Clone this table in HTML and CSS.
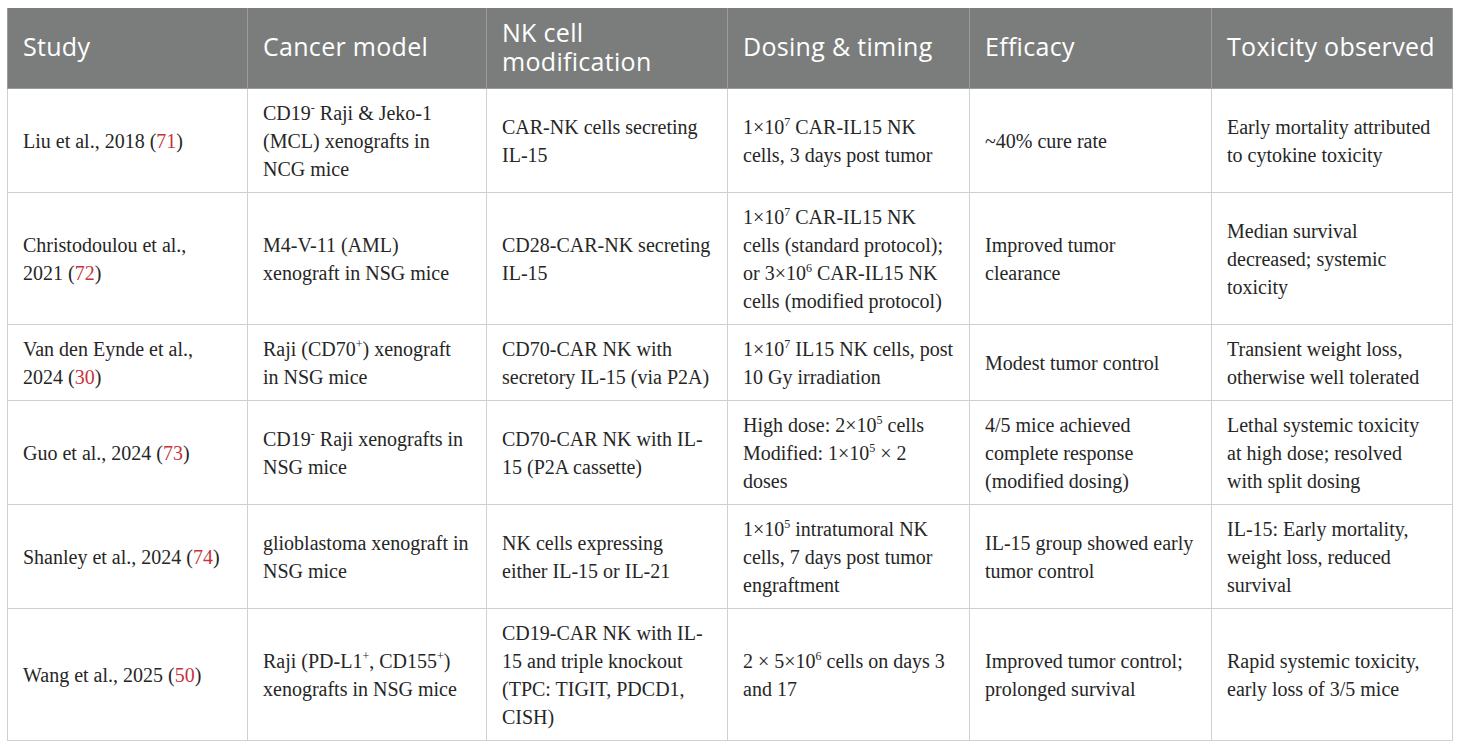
FILE: index.html
```html
<!DOCTYPE html>
<html>
<head>
<meta charset="utf-8">
<link rel="stylesheet" href="styles.css">
</head>
<body>
<div class="wrap">
<table class="tbl">
  <colgroup>
    <col class="c1"><col class="c2"><col class="c3"><col class="c4"><col class="c5"><col class="c6">
  </colgroup>
  <thead>
    <tr>
      <th>Study</th>
      <th>Cancer model</th>
      <th><span class="hl">NK cell</span><span class="hl">modification</span></th>
      <th>Dosing &amp; timing</th>
      <th>Efficacy</th>
      <th>Toxicity observed</th>
    </tr>
  </thead>
  <tbody>
    <tr>
      <td>Liu et al., 2018 (<span class="ref">71</span>)</td>
      <td>CD19<sup>-</sup> Raji &amp; Jeko-1<br>(MCL) xenografts in<br>NCG mice</td>
      <td>CAR-NK cells secreting<br>IL-15</td>
      <td>1×10<sup>7</sup> CAR-IL15 NK<br>cells, 3 days post tumor</td>
      <td>~40% cure rate</td>
      <td>Early mortality attributed<br>to cytokine toxicity</td>
    </tr>
    <tr>
      <td>Christodoulou et al.,<br>2021 (<span class="ref">72</span>)</td>
      <td>M4-V-11 (AML)<br>xenograft in NSG mice</td>
      <td>CD28-CAR-NK secreting<br>IL-15</td>
      <td>1×10<sup>7</sup> CAR-IL15 NK<br>cells (standard protocol);<br>or 3×10<sup>6</sup> CAR-IL15 NK<br>cells (modified protocol)</td>
      <td>Improved tumor<br>clearance</td>
      <td>Median survival<br>decreased; systemic<br>toxicity</td>
    </tr>
    <tr>
      <td>Van den Eynde et al.,<br>2024 (<span class="ref">30</span>)</td>
      <td>Raji (CD70<sup>+</sup>) xenograft<br>in NSG mice</td>
      <td>CD70-CAR NK with<br>secretory IL-15 (via P2A)</td>
      <td>1×10<sup>7</sup> IL15 NK cells, post<br>10 Gy irradiation</td>
      <td>Modest tumor control</td>
      <td>Transient weight loss,<br>otherwise well tolerated</td>
    </tr>
    <tr>
      <td>Guo et al., 2024 (<span class="ref">73</span>)</td>
      <td>CD19<sup>-</sup> Raji xenografts in<br>NSG mice</td>
      <td>CD70-CAR NK with IL-<br>15 (P2A cassette)</td>
      <td>High dose: 2×10<sup>5</sup> cells<br>Modified: 1×10<sup>5</sup> × 2<br>doses</td>
      <td>4/5 mice achieved<br>complete response<br>(modified dosing)</td>
      <td>Lethal systemic toxicity<br>at high dose; resolved<br>with split dosing</td>
    </tr>
    <tr>
      <td>Shanley et al., 2024 (<span class="ref">74</span>)</td>
      <td>glioblastoma xenograft in<br>NSG mice</td>
      <td>NK cells expressing<br>either IL-15 or IL-21</td>
      <td>1×10<sup>5</sup> intratumoral NK<br>cells, 7 days post tumor<br>engraftment</td>
      <td>IL-15 group showed early<br>tumor control</td>
      <td>IL-15: Early mortality,<br>weight loss, reduced<br>survival</td>
    </tr>
    <tr>
      <td>Wang et al., 2025 (<span class="ref">50</span>)</td>
      <td>Raji (PD-L1<sup>+</sup>, CD155<sup>+</sup>)<br>xenografts in NSG mice</td>
      <td>CD19-CAR NK with IL-<br>15 and triple knockout<br>(TPC: TIGIT, PDCD1,<br>CISH)</td>
      <td>2 × 5×10<sup>6</sup> cells on days 3<br>and 17</td>
      <td>Improved tumor control;<br>prolonged survival</td>
      <td>Rapid systemic toxicity,<br>early loss of 3/5 mice</td>
    </tr>
  </tbody>
</table>
</div>
</body>
</html>
```

FILE: styles.css
```css
html, body {
  margin: 0;
  padding: 0;
  background: #ffffff;
}

.wrap {
  padding: 8px 0 0 7px;
}

.tbl {
  border-collapse: collapse;
  table-layout: fixed;
  width: 1445px;
}

.c1 { width: 240px; }
.c2 { width: 239px; }
.c3 { width: 241px; }
.c4 { width: 242px; }
.c5 { width: 242px; }
.c6 { width: 241px; }

.tbl th {
  background: #7b7d7c;
  color: #ffffff;
  font-family: "Open Sans", "DejaVu Sans", sans-serif;
  font-weight: 400;
  font-size: 25px;
  letter-spacing: 0.3px;
  line-height: 29px;
  text-align: left;
  vertical-align: middle;
  height: 80px;
  box-sizing: border-box;
  padding: 0 10px 2px 15px;
  border: 1px solid #9a9b9a;
  border-top: none;
  white-space: nowrap;
}

.hl {
  display: block;
  height: 29px;
}

.tbl td {
  font-family: "Liberation Serif", Tinos, "Noto Serif", "DejaVu Serif", serif;
  font-size: 20px;
  line-height: 28px;
  color: #262626;
  text-align: left;
  vertical-align: middle;
  padding: 10px 10px 9px 15px;
  border: 1px solid #d0d0d0;
  white-space: nowrap;
}

.tbl sup {
  font-size: 12px;
  line-height: 0;
  vertical-align: 8px;
}

.ref {
  color: #c8333b;
}
```
